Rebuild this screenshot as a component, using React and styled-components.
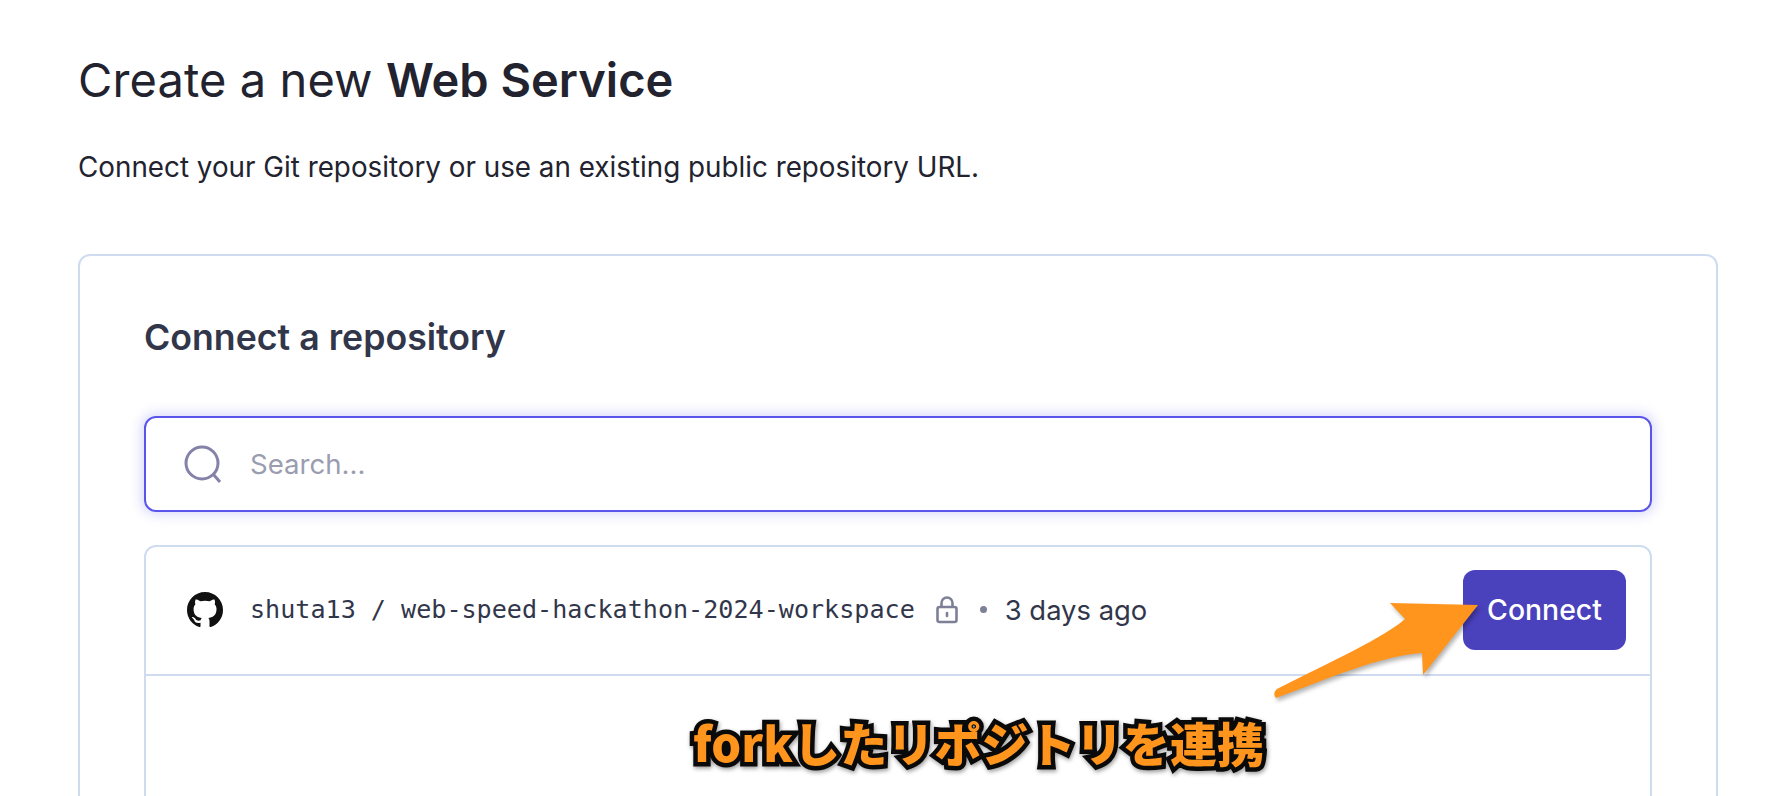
import React from "react";
import styled, { createGlobalStyle } from "styled-components";

const Global = createGlobalStyle`
  html, body { margin: 0; padding: 0; background: #fff; height: 796px; overflow: hidden; }
  #root { height: 796px; overflow: hidden; }
  * { box-sizing: border-box; }
`;

const Page = styled.main`
  position: relative;
  height: 796px;
  overflow: hidden;
  padding: 48px 70px 0 78px;
  font-family: Inter, "Liberation Sans", sans-serif;
  color: #22232f;
`;
const Title = styled.h1`
  margin: 0;
  font-size: 47px;
  line-height: 64px;
  font-weight: 400;
  letter-spacing: 0.1px;
  b { font-weight: 600; letter-spacing: 0; }
`;
const Subtitle = styled.p`
  margin: 37px 0 0;
  font-size: 27.8px;
  line-height: 36px;
  font-weight: 400;
`;
const Card = styled.section`
  margin-top: 69px;
  height: 700px;
  border: 2px solid #cfdcf0;
  border-radius: 12px;
  padding: 59px 64px 0;
`;
const CardTitle = styled.h2`
  margin: 0;
  font-size: 35.7px;
  line-height: 44px;
  font-weight: 600;
  color: #32364a;
`;
const Search = styled.div`
  margin-top: 57px;
  height: 96px;
  display: flex;
  align-items: center;
  gap: 28px;
  padding-left: 38px;
  border: 2px solid #5a55ea;
  border-radius: 12px;
  box-shadow: 0 0 12px 3px rgba(90, 85, 234, 0.22);
`;
const Placeholder = styled.span`
  font-size: 27.6px;
  color: #9a9db0;
`;
const RepoList = styled.div`
  margin-top: 33px;
  height: 400px;
  border: 2px solid #cfdcf0;
  border-radius: 12px;
`;
const RepoRow = styled.div`
  height: 129px;
  display: flex;
  align-items: center;
  padding: 0 24px 2px 41px;
  border-bottom: 2px solid #cfdcf0;
`;
const RepoName = styled.span`
  margin-left: 27px;
  font-family: "DejaVu Sans Mono", "Liberation Mono", monospace;
  font-size: 25.1px;
  color: #32364a;
  white-space: nowrap;
`;
const LockWrap = styled.span`
  display: flex;
  margin-left: 21px;
`;
const Dot = styled.span`
  width: 7px;
  height: 7px;
  margin-left: 22px;
  border-radius: 50%;
  background: #7d8096;
`;
const Age = styled.span`
  margin-left: 18px;
  font-size: 27.4px;
  color: #32364a;
  white-space: nowrap;
`;
const ConnectButton = styled.button`
  margin-left: auto;
  width: 163px;
  height: 80px;
  border: 0;
  border-radius: 12px;
  background: #4a41bd;
  color: #fff;
  font-family: inherit;
  font-size: 28.4px;
  font-weight: 500;
  padding: 0;
`;
const Arrow = styled.svg`
  position: absolute;
  left: 1260px;
  top: 590px;
  overflow: visible;
  filter: drop-shadow(2px 3px 2px rgba(0, 0, 0, 0.3));
`;
const Annotation = styled.div`
  position: absolute;
  left: 693px;
  top: 712px;
  font-family: "Noto Sans CJK JP", sans-serif;
  font-size: 47px;
  line-height: 60px;
  font-weight: 900;
  letter-spacing: 0.1px;
  white-space: nowrap;
  color: #ff951c;
  -webkit-text-stroke: 9px #0a0a0a;
  paint-order: stroke fill;
  filter: drop-shadow(1px 2px 2px rgba(0, 0, 0, 0.4));
`;

const SearchIcon = () => (
  <svg width="38" height="38" viewBox="0 0 38 38" fill="none" stroke="#8482a8" strokeWidth="3">
    <circle cx="18" cy="18" r="16" />
    <path d="M29 29l7 8" />
  </svg>
);
const GithubIcon = () => (
  <svg width="36" height="36" viewBox="0 0 16 16" fill="#111">
    <path d="M8 0C3.58 0 0 3.58 0 8c0 3.54 2.29 6.53 5.47 7.59.4.07.55-.17.55-.38 0-.19-.01-.82-.01-1.49-2.01.37-2.53-.49-2.69-.94-.09-.23-.48-.94-.82-1.13-.28-.15-.68-.52-.01-.53.63-.01 1.08.58 1.23.82.72 1.21 1.87.87 2.33.66.07-.52.28-.87.51-1.07-1.78-.2-3.64-.89-3.64-3.95 0-.87.31-1.59.82-2.15-.08-.2-.36-1.02.08-2.12 0 0 .67-.21 2.2.82.64-.18 1.32-.27 2-.27s1.36.09 2 .27c1.53-1.04 2.2-.82 2.2-.82.44 1.1.16 1.92.08 2.12.51.56.82 1.27.82 2.15 0 3.07-1.87 3.75-3.65 3.95.29.25.54.73.54 1.48 0 1.07-.01 1.93-.01 2.2 0 .21.15.46.55.38A8.01 8.01 0 0 0 16 8c0-4.42-3.58-8-8-8z" />
  </svg>
);
const LockIcon = () => (
  <svg width="22" height="28" viewBox="0 0 22 28" fill="none" stroke="#7d8096" strokeWidth="2.6">
    <rect x="1.5" y="11" width="19" height="15" rx="2" />
    <path d="M5.5 11V7a5.5 5.5 0 0 1 11 0v4" />
    <path d="M11 17v3" strokeLinecap="round" />
  </svg>
);

export default function App() {
  return (
    <Page>
      <Global />
      <Title>Create a new <b>Web Service</b></Title>
      <Subtitle>Connect your Git repository or use an existing public repository URL.</Subtitle>
      <Card>
        <CardTitle>Connect a repository</CardTitle>
        <Search>
          <SearchIcon />
          <Placeholder>Search...</Placeholder>
        </Search>
        <RepoList>
          <RepoRow>
            <GithubIcon />
            <RepoName>shuta13 / web-speed-hackathon-2024-workspace</RepoName>
            <LockWrap><LockIcon /></LockWrap>
            <Dot />
            <Age>3 days ago</Age>
            <ConnectButton>Connect</ConnectButton>
          </RepoRow>
        </RepoList>
      </Card>
      <Arrow width="220" height="110" viewBox="0 0 220 110">
        <path
          fill="#ff951c"
          d="M218 15 L130 13 L145 29 C125 47 70 72 17 99 Q12 103 16 108 C70 88 120 66 162 63 L163 85 Z"
        />
      </Arrow>
      <Annotation>forkしたリポジトリを連携</Annotation>
    </Page>
  );
}
